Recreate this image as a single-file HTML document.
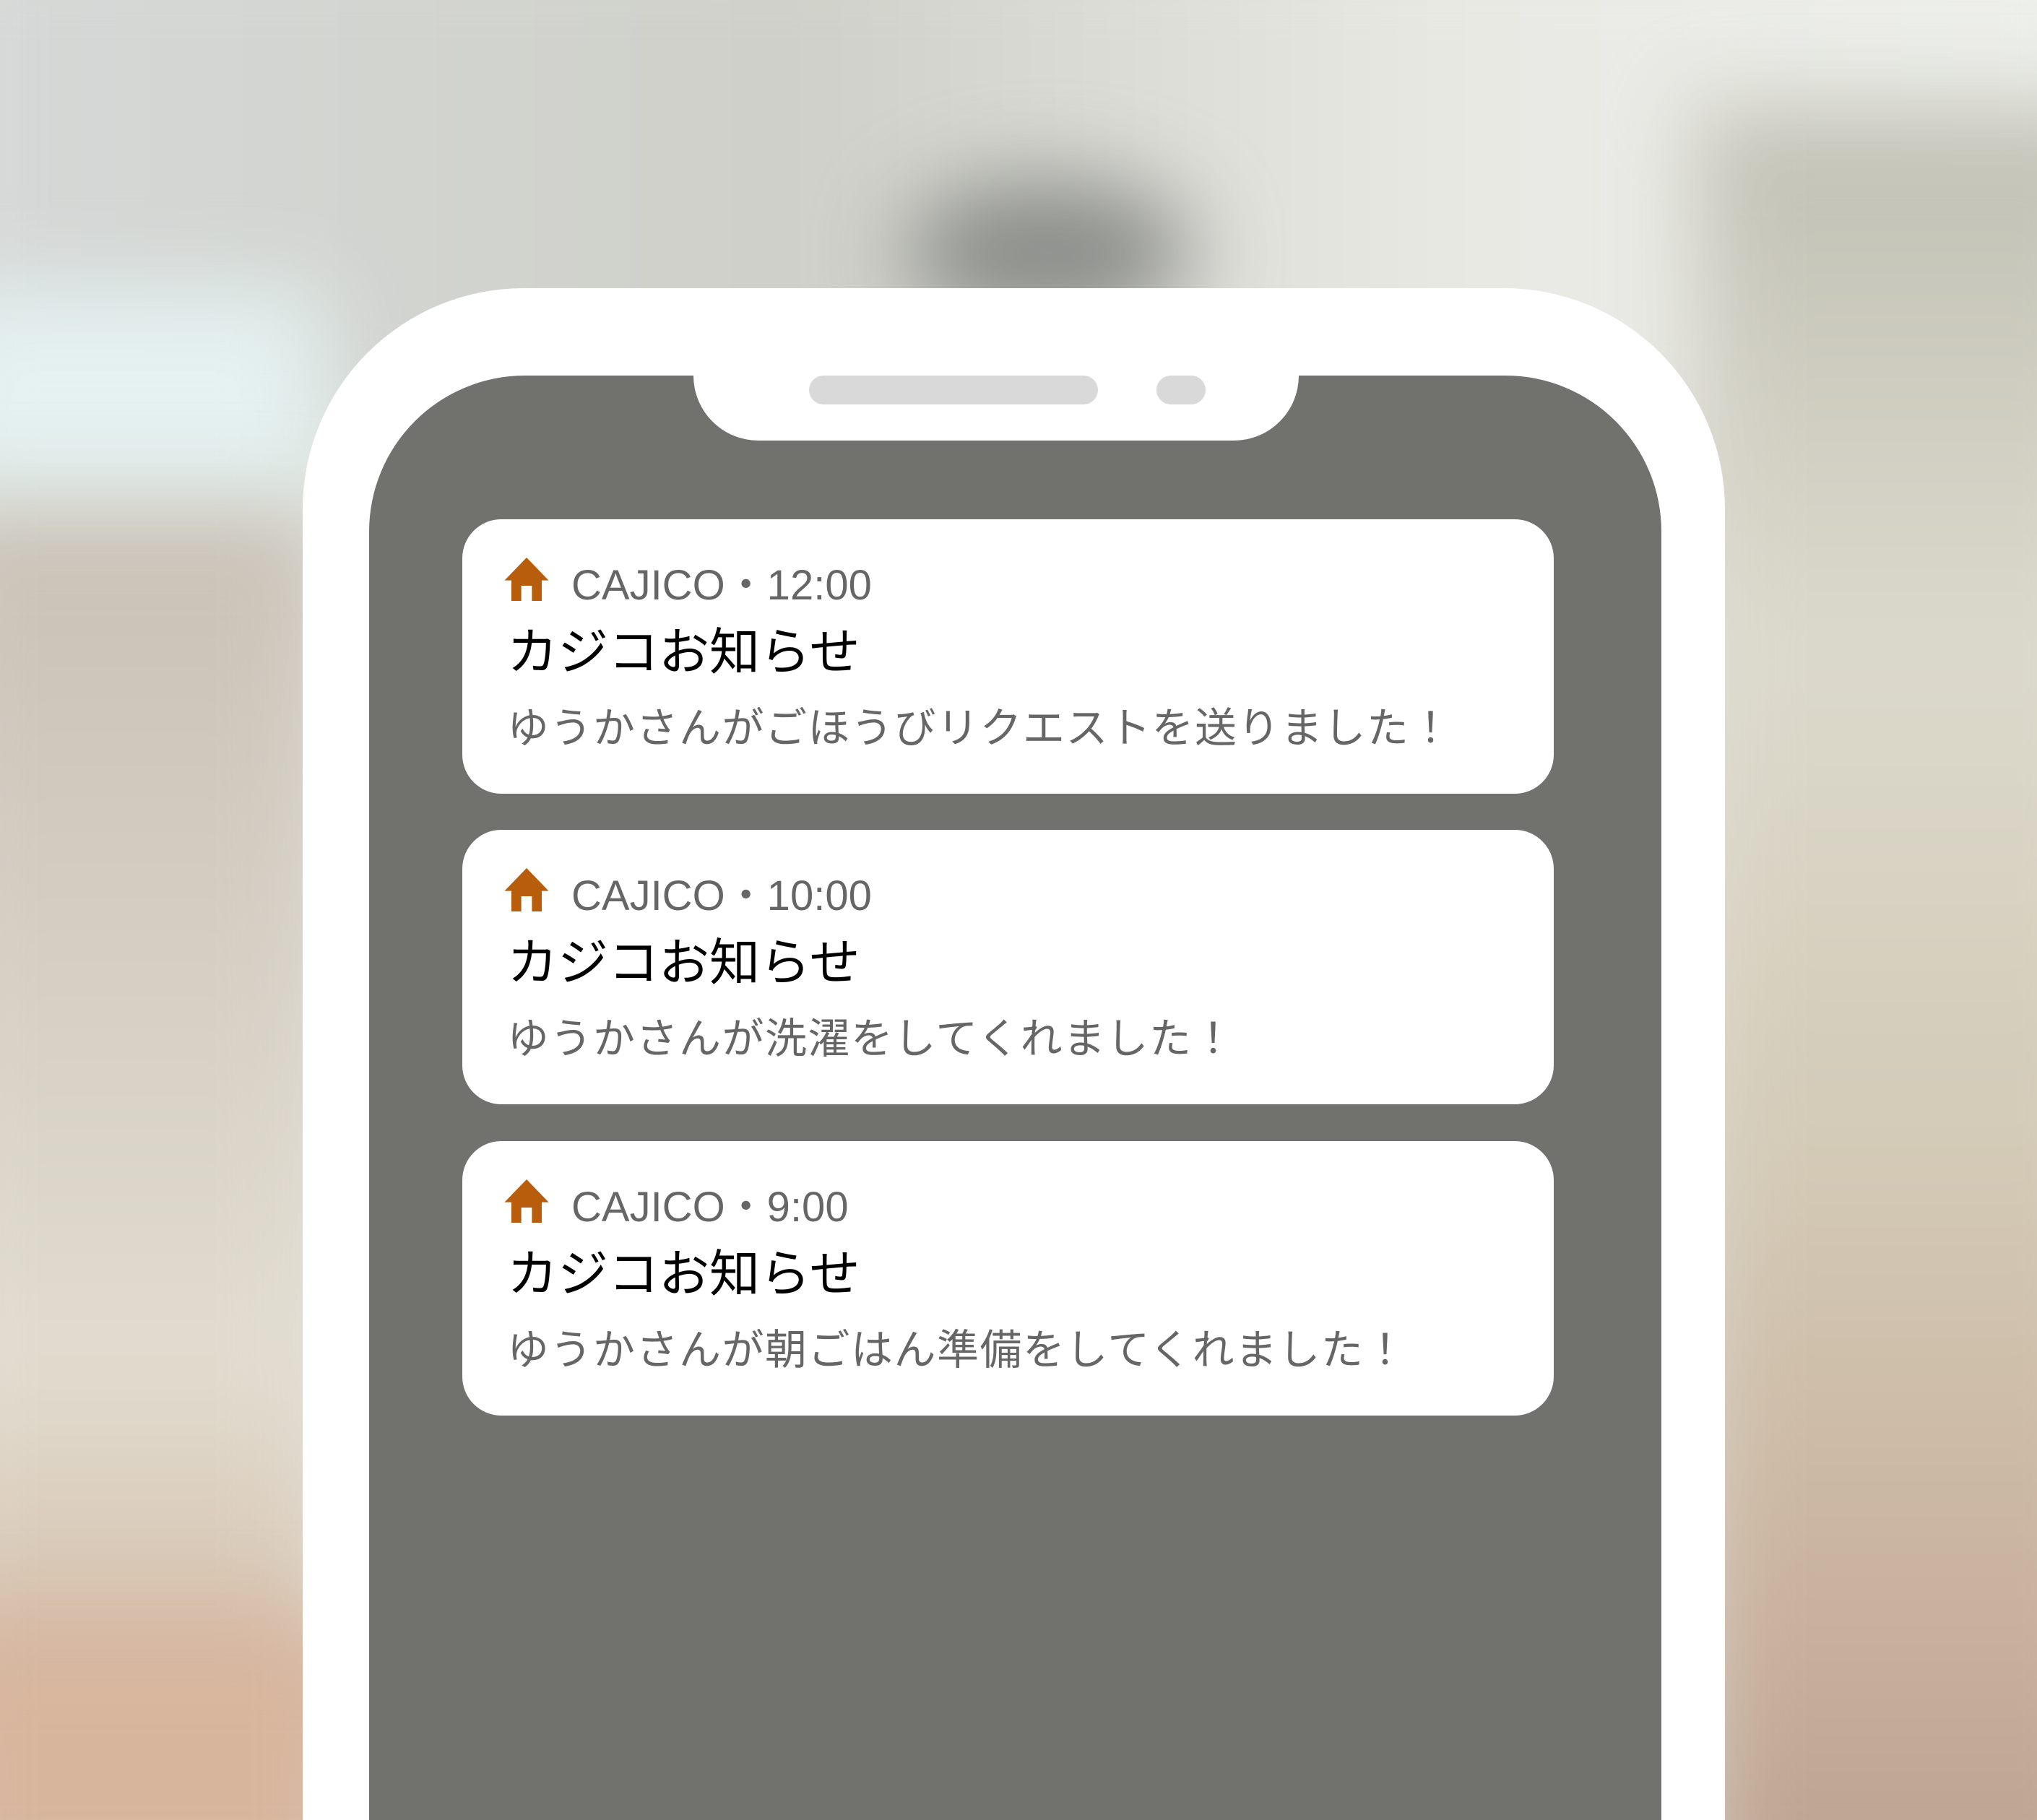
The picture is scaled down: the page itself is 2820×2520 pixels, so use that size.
<!DOCTYPE html>
<html style="width:2820px;height:2520px;overflow:hidden"><head><meta charset="utf-8"><style>
html,body{margin:0;padding:0}
body{width:2820px;height:2520px;position:relative;overflow:hidden;background:#e4e3dc;font-family:"Liberation Sans","Noto Sans CJK JP",sans-serif}
.wrap{position:absolute;left:0;top:0;width:2820px;height:2520px;overflow:hidden}
.bg{position:absolute;filter:blur(60px)}
.phone{position:absolute;left:419px;top:399px;width:1969px;height:2121px;background:#fff;border-radius:306px 306px 0 0}
.screen{position:absolute;left:511px;top:520px;width:1789px;height:2000px;background:#71726d;border-radius:216px 216px 0 0}
.notch{position:absolute;left:960px;top:500px;width:838px;height:110px;background:#fff;border-radius:0 0 90px 90px}
.pill{position:absolute;top:520px;height:40px;background:#d9d9d9;border-radius:20px}
.card{position:absolute;left:640px;width:1511px;height:380px;background:#fff;border-radius:54px}
.hd{position:absolute;left:151px;top:52px;font-size:58px;color:#666;white-space:nowrap;line-height:80px}
.ic{position:absolute;left:57px;top:53px}
.t{position:absolute;left:62px;top:134px;font-size:70px;color:#000;line-height:100px;white-space:nowrap}
.b{position:absolute;left:62px;top:250px;font-size:58px;color:#666;line-height:80px;white-space:nowrap;letter-spacing:1.5px}
</style></head><body>
<div class="wrap">
<div class="bg" style="left:-100px;top:-100px;width:3020px;height:700px;background:linear-gradient(90deg,#d6d9d8,#cfd0c9 40%,#e9e9e4 70%,#eef0ec)"></div>
<div class="bg" style="left:-100px;top:400px;width:550px;height:350px;background:#e4f1f0"></div>
<div class="bg" style="left:1250px;top:250px;width:400px;height:200px;background:#8a8c88;border-radius:50%"></div>
<div class="bg" style="left:-100px;top:700px;width:550px;height:1700px;background:linear-gradient(180deg,#c8c1b6,#d6d0c5 40%,#e2ddd0 70%,#d2b9a4)"></div>
<div class="bg" style="left:-100px;top:2250px;width:600px;height:400px;background:#d7b59d"></div>
<div class="bg" style="left:2350px;top:150px;width:600px;height:2500px;background:linear-gradient(180deg,#c0c0b4,#dcdacd 30%,#d3c9b5 60%,#c8b09c 85%,#bba190)"></div>
<div class="phone"></div>
<div class="screen"></div>
<div class="notch"></div>
<div class="pill" style="left:1120px;width:400px"></div>
<div class="pill" style="left:1601px;width:68px"></div>

<div class="card" style="top:719px">
<svg class="ic" width="64" height="60" viewBox="0 0 58 57"><path d="M29 0 L58 30 L49 30 L49 57 L36 57 L36 37 L22 37 L22 57 L9 57 L9 30 L0 30 Z" fill="#b85d0b"/></svg>
<div class="hd">CAJICO・12:00</div>
<div class="t">カジコお知らせ</div>
<div class="b">ゆうかさんがごほうびリクエストを送りました！</div>
</div>
<div class="card" style="top:1149px">
<svg class="ic" width="64" height="60" viewBox="0 0 58 57"><path d="M29 0 L58 30 L49 30 L49 57 L36 57 L36 37 L22 37 L22 57 L9 57 L9 30 L0 30 Z" fill="#b85d0b"/></svg>
<div class="hd">CAJICO・10:00</div>
<div class="t">カジコお知らせ</div>
<div class="b">ゆうかさんが洗濯をしてくれました！</div>
</div>
<div class="card" style="top:1580px">
<svg class="ic" width="64" height="60" viewBox="0 0 58 57"><path d="M29 0 L58 30 L49 30 L49 57 L36 57 L36 37 L22 37 L22 57 L9 57 L9 30 L0 30 Z" fill="#b85d0b"/></svg>
<div class="hd">CAJICO・9:00</div>
<div class="t">カジコお知らせ</div>
<div class="b">ゆうかさんが朝ごはん準備をしてくれました！</div>
</div>
</div>
</body></html>
